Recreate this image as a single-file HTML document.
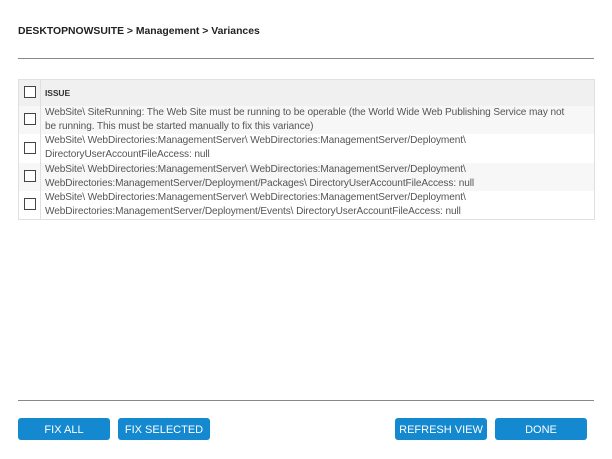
<!DOCTYPE html>
<html><head><meta charset="utf-8"><style>
body{margin:0;width:612px;height:459px;background:#fff;font-family:"Liberation Sans",sans-serif;position:relative;overflow:hidden}
.t{position:absolute;left:18px;top:26px;font-size:10.4px;font-weight:bold;color:#222}
.hr{position:absolute;left:18px;width:576px;height:1px;background:#888}
table{position:absolute;left:18px;top:79px;width:577px;border-collapse:collapse;border:1px solid #e0e0e0}
td{padding:0;font-size:10.1px;color:#555;line-height:14px;white-space:nowrap;vertical-align:middle;letter-spacing:-0.1px}
td.c{width:21px;border-right:1px solid #e0e0e0;text-align:center}
td.x{padding-left:4px}
.cb{display:inline-block;width:10px;height:10px;border:1px solid #444;background:#fff;vertical-align:middle}
tr.h{background:#f0f0f0;height:26px}
tr.h td.x{font-size:8.5px;font-weight:bold;color:#333}
tr.g{background:#f7f7f7}
tr{height:28.5px}
.b{position:absolute;top:418px;width:92px;height:22px;background:#1489d0;border-radius:3px;color:#fff;font-size:11px;text-align:center;line-height:25px}
</style></head><body>
<div class="t">DESKTOPNOWSUITE &gt; Management &gt; Variances</div>
<div class="hr" style="top:58px"></div>
<table>
<tr class="h"><td class="c"><span class="cb"></span></td><td class="x">ISSUE</td></tr>
<tr class="g"><td class="c"><span class="cb"></span></td><td class="x">WebSite\ SiteRunning: The Web Site must be running to be operable (the World Wide Web Publishing Service may not<br>be running. This must be started manually to fix this variance)</td></tr>
<tr><td class="c"><span class="cb"></span></td><td class="x">WebSite\ WebDirectories:ManagementServer\ WebDirectories:ManagementServer/Deployment\<br>DirectoryUserAccountFileAccess: null</td></tr>
<tr class="g"><td class="c"><span class="cb"></span></td><td class="x">WebSite\ WebDirectories:ManagementServer\ WebDirectories:ManagementServer/Deployment\<br>WebDirectories:ManagementServer/Deployment/Packages\ DirectoryUserAccountFileAccess: null</td></tr>
<tr><td class="c"><span class="cb"></span></td><td class="x">WebSite\ WebDirectories:ManagementServer\ WebDirectories:ManagementServer/Deployment\<br>WebDirectories:ManagementServer/Deployment/Events\ DirectoryUserAccountFileAccess: null</td></tr>
</table>
<div class="hr" style="top:400px"></div>
<div class="b" style="left:18px">FIX ALL</div>
<div class="b" style="left:118px">FIX SELECTED</div>
<div class="b" style="left:395px">REFRESH VIEW</div>
<div class="b" style="left:495px">DONE</div>
</body></html>
